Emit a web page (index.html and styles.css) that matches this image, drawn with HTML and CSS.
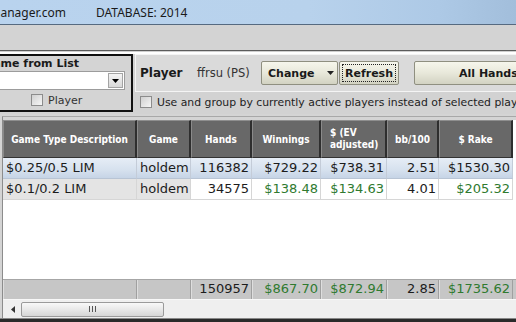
FILE: index.html
```html
<!DOCTYPE html>
<html>
<head>
<meta charset="utf-8">
<link rel="stylesheet" href="styles.css">
</head>
<body>
<div class="app">
  <div class="titlebar">
    <div class="site"><span>Holdem Manager - www.holdemmanager.com</span></div>
    <span class="db">DATABASE: 2014</span>
  </div>
  <div class="toolbar"></div>
  <div class="sep"></div>
  <div class="controls">
    <div class="gamebox">
      <div class="gamebox-title"><span>Select Game from List</span></div>
      <div class="combo">
        <div class="combo-btn">
          <svg width="7" height="4" viewBox="0 0 7 4"><path d="M0 0H7L3.5 4Z" fill="#000"/></svg>
        </div>
      </div>
      <div class="check-row game-check"><span class="check"></span><span>Player</span></div>
    </div>
    <div class="playerarea">
      <div class="playerpanel">
        <span class="plabel">Player</span>
        <span class="pname">ffrsu (PS)</span>
        <div class="btn change"><span>Change</span><svg class="caret" width="7" height="4" viewBox="0 0 7 4"><path d="M0 0H7L3.5 4Z" fill="#222"/></svg></div>
        <div class="btn refresh"><span class="focus">Refresh</span></div>
        <div class="btn allhands"><span>All Hands</span></div>
      </div>
      <div class="check-row userow"><span class="check"></span><span class="usetext">Use and group by currently active players instead of selected players</span></div>
    </div>
  </div>
  <div class="grid">
    <div class="row head">
      <div class="cell">Game Type Description</div>
      <div class="cell">Game</div>
      <div class="cell">Hands</div>
      <div class="cell">Winnings</div>
      <div class="cell ev"><span>$ (EV<br>adjusted)</span></div>
      <div class="cell">bb/100</div>
      <div class="cell">$ Rake</div>
    </div>
    <div class="row data sel">
      <div class="cell txt">$0.25/0.5 LIM</div>
      <div class="cell txt">holdem</div>
      <div class="cell num">116382</div>
      <div class="cell num">$729.22</div>
      <div class="cell num">$738.31</div>
      <div class="cell num">2.51</div>
      <div class="cell num">$1530.30</div>
    </div>
    <div class="row data">
      <div class="cell txt gray">$0.1/0.2 LIM</div>
      <div class="cell txt gray">holdem</div>
      <div class="cell num">34575</div>
      <div class="cell num green">$138.48</div>
      <div class="cell num green">$134.63</div>
      <div class="cell num">4.01</div>
      <div class="cell num green">$205.32</div>
    </div>
    <div class="filler"></div>
    <div class="row foot">
      <div class="cell"></div>
      <div class="cell"></div>
      <div class="cell num">150957</div>
      <div class="cell num green">$867.70</div>
      <div class="cell num green">$872.94</div>
      <div class="cell num">2.85</div>
      <div class="cell num green">$1735.62</div>
    </div>
    <div class="hscroll">
      <svg class="arrow" width="4" height="7" viewBox="0 0 4 7"><path d="M4 0V7L0 3.5Z" fill="#333"/></svg>
      <div class="thumb"><span class="grip"></span></div>
    </div>
  </div>
  <div class="bottomline"></div>
</div>
</body>
</html>
```
FILE: styles.css
```css
html, body {
  margin: 0;
  padding: 0;
}
body {
  width: 516px;
  height: 322px;
  overflow: hidden;
  background: #d4d4d4;
  font-family: "DejaVu Sans", Verdana, sans-serif;
  color: #1c1c1c;
}
.app {
  width: 516px;
  height: 322px;
  display: flex;
  flex-direction: column;
  overflow: hidden;
}
.titlebar {
  height: 24px;
  border-bottom: 1px solid #566a80;
  background: linear-gradient(90deg, #b9d3ee 0%, #b8d2ec 60%, #adc9e6 85%, #a2bedb 100%);
  display: flex;
  align-items: center;
  font-family: "Noto Sans", "Open Sans", sans-serif;
  font-size: 12px;
  color: #1a1a1a;
  flex-shrink: 0;
}
.site {
  width: 66px;
  display: flex;
  justify-content: flex-end;
  overflow: hidden;
  white-space: nowrap;
}
.db {
  margin-left: 30px;
  white-space: nowrap;
}
.toolbar {
  height: 25px;
  background: #d3d3d3;
  flex-shrink: 0;
}
.sep {
  height: 1px;
  background: #5c5c5c;
  border-bottom: 1px solid #cfcfcf;
  flex-shrink: 0;
}
.controls {
  height: 60px;
  border-top: 2px solid #fff;
  display: flex;
  flex-shrink: 0;
  background: #d2d2d2;
}
.gamebox {
  width: 146px;
  margin-left: -17px;
  height: 54px;
  border: 2px solid #111;
  display: flex;
  flex-direction: column;
  flex-shrink: 0;
  background: #d4d4d4;
}
.gamebox-title {
  height: 15px;
  display: flex;
  justify-content: flex-end;
  align-items: center;
  padding-right: 52px;
  white-space: nowrap;
  font-weight: bold;
  font-size: 11px;
  color: #1a1a1a;
}
.combo {
  height: 17px;
  margin-right: 6px;
  background: #fff;
  border: 1px solid #9c9c9c;
  border-left: none;
  display: flex;
  justify-content: flex-end;
  align-items: center;
}
.combo-btn {
  width: 13px;
  height: 13px;
  margin-right: 1px;
  border: 1px solid #a4a4a4;
  background: linear-gradient(#f4f4f4, #d8d8d8);
  display: flex;
  align-items: center;
  justify-content: center;
}
.check-row {
  display: flex;
  align-items: center;
  font-size: 11px;
  white-space: nowrap;
}
.game-check {
  height: 20px;
  padding-left: 46px;
  color: #333;
}
.check {
  width: 10px;
  height: 10px;
  border: 1px solid #8c8c8c;
  background: linear-gradient(135deg, #d0d0d0, #f6f6f6);
  margin-right: 5px;
  flex-shrink: 0;
}
.playerarea {
  margin-left: 2px;
  flex: 1;
  display: flex;
  flex-direction: column;
  min-width: 0;
}
.playerpanel {
  height: 36px;
  border: 1px solid #f4f4f4;
  border-right: none;
  background: #dadada;
  display: flex;
  align-items: center;
  padding-left: 4px;
  white-space: nowrap;
}
.plabel {
  width: 57px;
  font-weight: bold;
  font-size: 12px;
  color: #1a1a1a;
  flex-shrink: 0;
}
.pname {
  width: 64px;
  font-size: 11.5px;
  color: #333;
  flex-shrink: 0;
}
.btn {
  height: 24px;
  box-sizing: border-box;
  border: 1px solid #8f8f80;
  border-radius: 2px;
  background: linear-gradient(#f6f6ec, #e8e8da 50%, #d2d2c2);
  display: flex;
  align-items: center;
  justify-content: center;
  font-weight: bold;
  font-size: 11px;
  color: #1a1a1a;
  flex-shrink: 0;
}
.change {
  width: 77px;
  justify-content: flex-start;
  padding-left: 6px;
}
.caret {
  margin-left: 12px;
}
.refresh {
  width: 60px;
  margin-left: 1px;
  padding: 2px;
  align-items: stretch;
}
.focus {
  flex: 1;
  border: 1px dotted #222;
  display: flex;
  align-items: center;
  justify-content: center;
}
.allhands {
  width: 160px;
  margin-left: 15px;
  padding-left: 44px;
  justify-content: flex-start;
  font-size: 11px;
}
.userow {
  height: 20px;
  padding-left: 5px;
  color: #222;
}
.usetext {
  font-size: 10.85px;
}
.grid {
  margin-left: 2px;
  margin-top: 2px;
  border-left: 1px solid #8c8c8c;
  border-top: 1px solid #a8a8a8;
  padding-top: 3px;
  background: #fff;
  display: flex;
  flex-direction: column;
  flex: 1;
  min-height: 0;
}
.row {
  display: grid;
  grid-template-columns: 134px 54px 61px 69px 66px 52px 74px;
  flex-shrink: 0;
}
.cell {
  box-sizing: border-box;
  white-space: nowrap;
  overflow: hidden;
}
.head {
  height: 38px;
  margin-top: -3px;
  border-top: 3px solid #d4d4d4;
  box-sizing: content-box;
}
.head .cell {
  background: #686868;
  color: #fff;
  font-family: "DejaVu Sans Condensed", "DejaVu Sans", sans-serif;
  font-stretch: condensed;
  font-weight: bold;
  font-size: 10px;
  display: flex;
  align-items: center;
  justify-content: center;
  border-top: 1px solid #8e8e8e;
  border-left: 1px solid #8a8a8a;
  border-right: 2px solid #2e2e2e;
  border-bottom: 1px solid #333;
}
.head .ev {
  justify-content: flex-start;
  padding-left: 8px;
  line-height: 12px;
  white-space: normal;
}
.data {
  height: 21px;
}
.data .cell {
  font-size: 13px;
  line-height: 20px;
  border-right: 1px solid #d6d6d6;
  border-bottom: 1px solid #d6d6d6;
  color: #1c1c1c;
}
.sel .cell {
  background: linear-gradient(#e6edf6, #d6e1ee 60%, #c6d4e6);
  border-right-color: #c4ccd8;
  border-bottom-color: #b8c4d4;
}
.txt {
  padding-left: 3px;
}
.num {
  text-align: right;
  padding-right: 2px;
}
.gray {
  background: #e4e4e4;
}
.green {
  color: #2f7a2f !important;
}
.filler {
  flex: 1;
  background: #fff;
}
.foot {
  height: 20px;
  background: #c6c6c6;
  border-top: 1px solid #a6a6a6;
  box-sizing: border-box;
}
.foot .cell {
  font-size: 13px;
  line-height: 18px;
  border-left: 1px solid #dedede;
  border-right: 1px solid #a0a0a0;
  background: #c6c6c6;
  color: #1c1c1c;
}
.hscroll {
  height: 19px;
  flex-shrink: 0;
  background: #efefef;
  border-top: 1px solid #f8f8f8;
  display: flex;
  align-items: center;
  box-sizing: border-box;
}
.arrow {
  margin-left: 8px;
}
.thumb {
  width: 141px;
  height: 13px;
  margin-left: 6px;
  border: 1px solid #9a9a9a;
  border-radius: 2px;
  background: linear-gradient(#f8f8f8, #e8e8e8 50%, #d6d6d6);
  display: flex;
  align-items: center;
  justify-content: center;
}
.grip {
  width: 7px;
  height: 6px;
  background: repeating-linear-gradient(90deg, #555 0 1px, transparent 1px 3px);
}
.bottomline {
  height: 3px;
  flex-shrink: 0;
  background: #2a2a2a;
  border-top: 1px solid #888;
}
```
